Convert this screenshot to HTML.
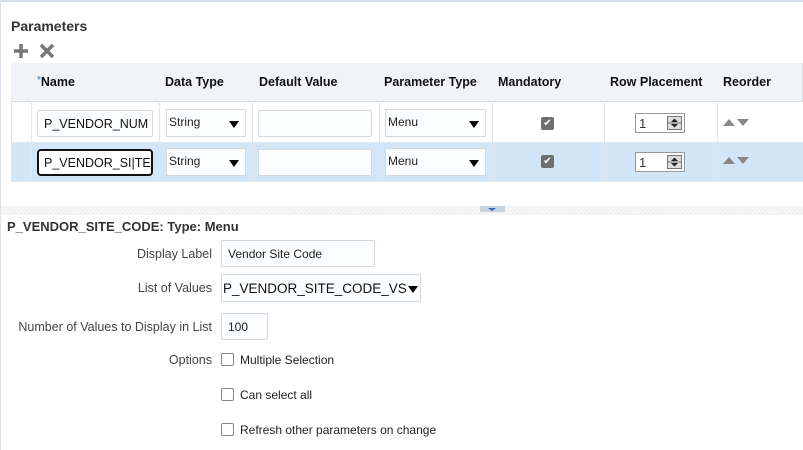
<!DOCTYPE html>
<html><head><style>
*{margin:0;padding:0;box-sizing:border-box}
body{width:803px;height:450px;background:#fff;font-family:"Liberation Sans",Arial,sans-serif;font-size:12px;color:#000;position:relative;overflow:hidden}
.a{position:absolute}
.th{position:absolute;top:63px;height:39px;background:#f1f3f6;border-right:1px solid #d9dee4;font-weight:bold;font-size:12.5px;color:#111;padding:12px 0 0 7px;white-space:nowrap}
.inp{position:absolute;background:#fcfdfe;border:1px solid #d5d9de;border-radius:2px;overflow:hidden;white-space:nowrap}
.sel{position:absolute;background:#fcfdfe;border:1px solid #d5d9de;font-size:12px;padding:5px 0 0 2px;color:#222}
.sel:after{content:"";position:absolute;right:6px;top:11px;border-left:5px solid transparent;border-right:5px solid transparent;border-top:7px solid #000}
.chk{position:absolute;width:13px;height:13px;background:#6f6f6f;border-radius:2px;color:#fff;font-size:10px;line-height:13px;text-align:center}
.spin{position:absolute;width:50px;height:20px;border:1px solid #999;background:#fff;font-size:13px;padding:2px 0 0 3px;color:#333}
.spin svg{position:absolute;right:2px;top:2px}
.lbl{position:absolute;right:591px;font-size:12.5px;color:#444;text-align:right;white-space:nowrap}
.cb{position:absolute;left:221px;width:13px;height:13px;border:1px solid #888;border-radius:2px;background:#fff}
.ct{position:absolute;left:240px;font-size:12px;color:#222}
</style></head><body>
<div class="a" style="left:0;top:0;width:803px;height:2px;background:#d9e0e7"></div>
<div class="a" style="left:0;top:0;width:1px;height:450px;background:#dde2e8"></div>
<div class="a" style="left:11px;top:18px;font-weight:bold;font-size:14px;color:#333">Parameters</div>
<svg class="a" style="left:13px;top:43px" width="44" height="16"><path d="M8 1v14M1 8h14" stroke="#777" stroke-width="3.5"/><path d="M28 2l12 12M40 2L28 14" stroke="#777" stroke-width="3.5"/></svg>
<div class="a" style="left:11px;top:63px;width:792px;height:118px;border-top:1px solid #d9dee4;border-left:1px solid #d9dee4"></div>
<div class="th" style="left:11px;width:21px"></div>
<div class="th" style="left:31px;width:128px;padding-left:6px"><span style="color:#3a7ac9;font-weight:normal;font-size:10px;vertical-align:top">*</span>Name</div>
<div class="th" style="left:158px;width:95px">Data Type</div>
<div class="th" style="left:252px;width:127px">Default Value</div>
<div class="th" style="left:378px;width:114px;padding-left:6px">Parameter Type</div>
<div class="th" style="left:491px;width:113px">Mandatory</div>
<div class="th" style="left:603px;width:114px">Row Placement</div>
<div class="th" style="left:716px;width:87px">Reorder</div>
<div class="a" style="left:11px;top:101px;width:792px;height:1px;background:#d9dee4"></div>
<div class="a" style="left:11px;top:142px;width:792px;height:39px;background:#d2e6f8"></div>
<div class="a" style="left:11px;top:142px;width:792px;height:1px;background:#e3e6ea"></div>
<div class="a" style="left:11px;top:181px;width:792px;height:1px;background:#e3e6ea"></div>
<div class="a" style="left:31px;top:102px;width:1px;height:80px;background:#e3e6ea"></div>
<div class="a" style="left:159px;top:102px;width:1px;height:80px;background:#e3e6ea"></div>
<div class="a" style="left:252px;top:102px;width:1px;height:80px;background:#e3e6ea"></div>
<div class="a" style="left:379px;top:102px;width:1px;height:80px;background:#e3e6ea"></div>
<div class="a" style="left:492px;top:102px;width:1px;height:80px;background:#e3e6ea"></div>
<div class="a" style="left:604px;top:102px;width:1px;height:80px;background:#e3e6ea"></div>
<div class="a" style="left:717px;top:102px;width:1px;height:80px;background:#e3e6ea"></div>
<!-- row1 -->
<div class="inp" style="left:37px;top:110px;width:116px;height:27px;font-size:12.5px;padding:6px 0 0 6px;color:#111">P_VENDOR_NUM</div>
<div class="sel" style="left:166px;top:109px;width:80px;height:28px">String</div>
<div class="inp" style="left:258px;top:110px;width:114px;height:27px"></div>
<div class="sel" style="left:385px;top:109px;width:101px;height:28px">Menu</div>
<div class="chk" style="left:541px;top:117px">✔</div>
<div class="spin" style="left:635px;top:113px">1<svg width="15" height="14"><rect x=".5" y=".5" width="14" height="13" fill="#ddd" stroke="#777"/><path d="M4 6L7.5 2.5L11 6ZM4 8L7.5 11.5L11 8Z" fill="#222"/><path d="M1 7H14" stroke="#777"/></svg></div>
<svg class="a" style="left:723px;top:119px" width="27" height="8"><path d="M0 7L6 0L12 7Z M14 0H26L20 7Z" fill="#888"/></svg>
<!-- row2 -->
<div class="inp" style="left:37px;top:149px;width:116px;height:27px;border:2px solid #111;border-radius:4px;font-size:12.5px;padding:5px 0 0 5px;color:#111;background:#fff">P_VENDOR_SI|TE_</div>
<div class="sel" style="left:166px;top:148px;width:80px;height:28px">String</div>
<div class="inp" style="left:258px;top:149px;width:114px;height:27px"></div>
<div class="sel" style="left:385px;top:148px;width:101px;height:28px">Menu</div>
<div class="chk" style="left:541px;top:155px">✔</div>
<div class="spin" style="left:635px;top:152px">1<svg width="15" height="14"><rect x=".5" y=".5" width="14" height="13" fill="#ddd" stroke="#777"/><path d="M4 6L7.5 2.5L11 6ZM4 8L7.5 11.5L11 8Z" fill="#222"/><path d="M1 7H14" stroke="#777"/></svg></div>
<svg class="a" style="left:723px;top:157px" width="27" height="8"><path d="M0 7L6 0L12 7Z M14 0H26L20 7Z" fill="#888"/></svg>
<!-- splitter -->
<div class="a" style="left:1px;top:206px;width:802px;height:9px;background:repeating-linear-gradient(45deg,#eee 0 1px,#f8f8f8 1px 3px)"></div>
<div class="a" style="left:480px;top:206px;width:25px;height:6px;background:#c9d3dd"></div>
<div class="a" style="left:488px;top:208px;border-left:4px solid transparent;border-right:4px solid transparent;border-top:3px solid #2c6fc1"></div>
<!-- detail -->
<div class="a" style="left:7px;top:219px;font-weight:bold;font-size:13px;color:#333">P_VENDOR_SITE_CODE: Type: Menu</div>
<div class="lbl" style="top:247px">Display Label</div>
<div class="inp" style="left:221px;top:240px;width:154px;height:27px;font-size:12px;padding:6px 0 0 6px;color:#222">Vendor Site Code</div>
<div class="lbl" style="top:281px">List of Values</div>
<div class="a" style="left:221px;top:274px;width:200px;height:28px;border:1px solid #d5d9de;background:#fcfdfe;font-size:13.5px;padding:6px 0 0 1px;color:#111;overflow:hidden;white-space:nowrap">P_VENDOR_SITE_CODE_VS</div>
<div class="a" style="left:408px;top:286px;border-left:5px solid transparent;border-right:5px solid transparent;border-top:7px solid #000"></div>
<div class="lbl" style="top:320px">Number of Values to Display in List</div>
<div class="inp" style="left:221px;top:313px;width:47px;height:27px;font-size:12px;padding:6px 0 0 6px;color:#222">100</div>
<div class="lbl" style="top:353px">Options</div>
<div class="cb" style="top:353px"></div><div class="ct" style="top:353px">Multiple Selection</div>
<div class="cb" style="top:388px"></div><div class="ct" style="top:388px">Can select all</div>
<div class="cb" style="top:423px"></div><div class="ct" style="top:423px">Refresh other parameters on change</div>
</body></html>
